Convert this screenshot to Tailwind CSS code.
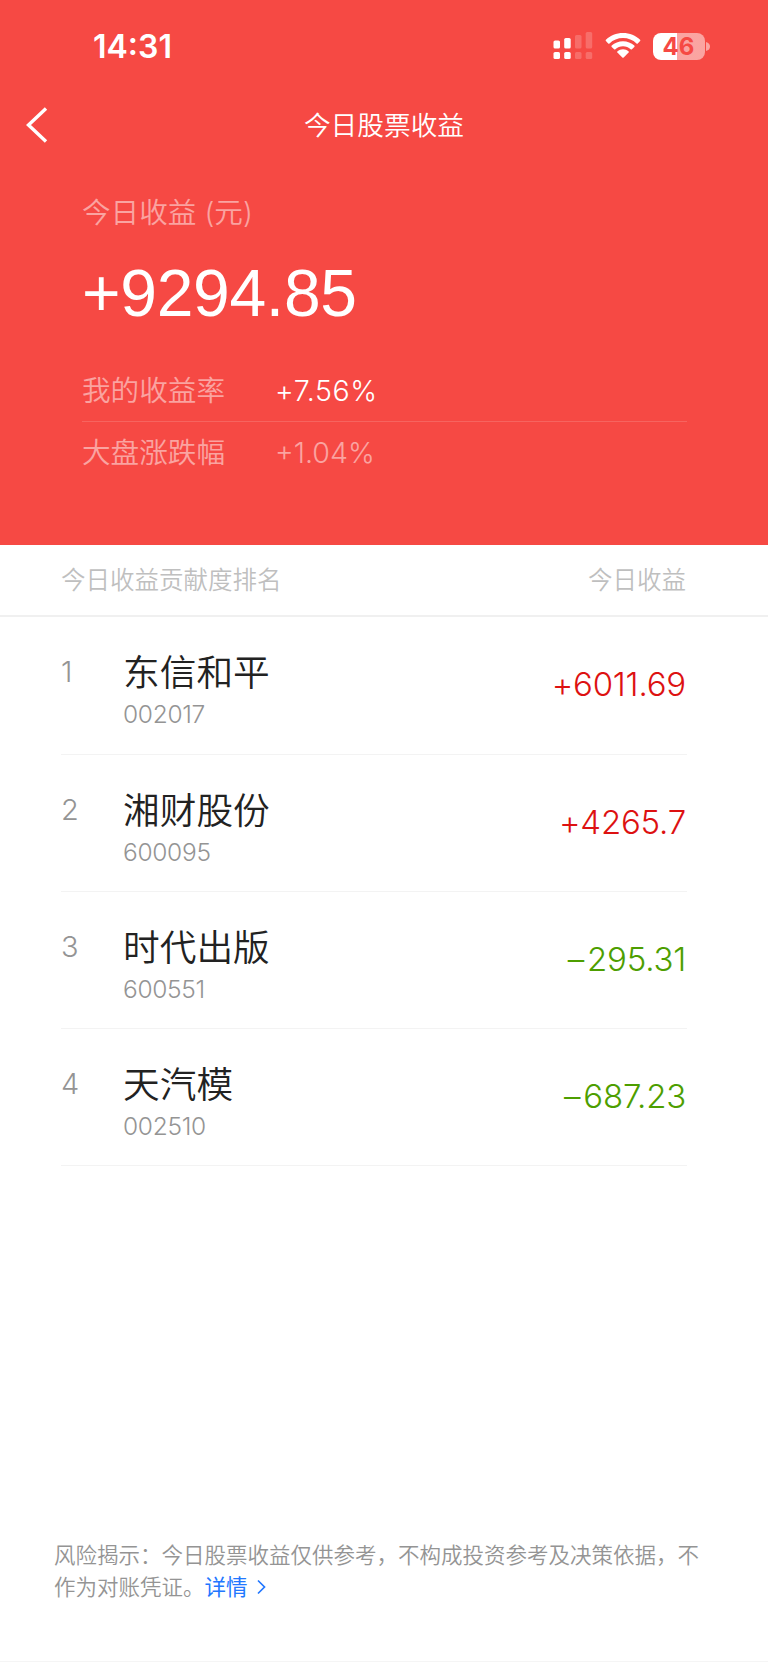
<!DOCTYPE html>
<html lang="zh-CN">
  <head>
    <meta charset="UTF-8" />
    <meta name="viewport" content="width=device-width, initial-scale=1.0" />
    <title>今日股票收益</title>
    <script src="https://cdn.jsdelivr.net/npm/@tailwindcss/browser@4"></script>
  </head>
  <body
    class="w-[768px] h-[1662px] flex flex-col bg-white font-[350] font-['Inter','Noto_Sans_CJK_SC',sans-serif]"
  >
    <header class="h-[545px] bg-[#f64944] text-white">
      <!-- status bar -->
      <div class="h-[92px] pl-[93px] pr-[58px] flex items-center justify-between">
        <p class="pt-[2px] text-[32px] leading-[92px] font-semibold">14:31</p>
        <div class="flex items-center gap-3">
          <svg class="w-10 h-7" viewBox="0 0 40 28" fill="#fff">
            <rect x="0.5" y="8.5" width="6.5" height="8" rx="1.6" />
            <rect x="0.5" y="20" width="6.5" height="7" rx="1.6" />
            <rect x="11.2" y="6" width="6.5" height="10.5" rx="1.6" />
            <rect x="11.2" y="20" width="6.5" height="7" rx="1.6" />
            <g opacity="0.2">
              <rect x="22" y="3" width="6.5" height="13.5" rx="1.6" />
              <rect x="22" y="20" width="6.5" height="7" rx="1.6" />
              <rect x="32.7" y="0" width="6.5" height="16.5" rx="1.6" />
              <rect x="32.7" y="20" width="6.5" height="7" rx="1.6" />
            </g>
          </svg>
          <svg class="w-9 h-7" viewBox="0 0 36 28" fill="#fff">
            <path d="M18 1C11.3 1 5.200 3.500 0.900 7.800Q0.300 8.500 0.900 9.100L3.200 11.400Q3.900 12 4.500 11.400C8.100 8 12.800 6 18 6S27.900 8 31.500 11.400Q32.100 12 32.800 11.400L35.100 9.100Q35.700 8.500 35.100 7.800C30.800 3.500 24.700 1 18 1Z" />
            <path d="M18 9.200C13.700 9.200 9.700 10.800 6.700 13.600Q6 14.300 6.700 14.900L9.100 17.200Q9.700 17.800 10.400 17.200C12.400 15.300 15.100 14.200 18 14.200S23.600 15.300 25.600 17.200Q26.300 17.800 26.900 17.200L29.300 14.900Q30 14.300 29.300 13.600C26.300 10.800 22.300 9.200 18 9.200Z" />
            <path d="M18 17.300C15.900 17.300 14 18 12.500 19.300Q11.800 20 12.400 20.600L17.300 25.500Q18 26.100 18.700 25.500L23.600 20.600Q24.200 20 23.500 19.300C22 18 20.100 17.300 18 17.300Z" />
          </svg>
          <div class="flex items-center gap-[1.500px]">
            <div
              class="w-[52px] h-[27px] rounded-[8px] bg-linear-to-r from-white from-46% to-white/50 to-46% text-center text-[24px] leading-[27px] font-bold text-[#f64944]"
            >
              46
            </div>
            <svg class="w-1 h-[9px]" viewBox="0 0 4 9">
              <path d="M0 0Q4 1 4 4.500Q4 8 0 9Z" fill="#fff" opacity="0.500" />
            </svg>
          </div>
        </div>
      </div>

      <!-- title bar -->
      <div class="h-[66px] px-[26px] grid grid-cols-[1fr_auto_1fr] items-center">
        <svg class="w-[22px] h-9" viewBox="0 0 22 36" fill="none">
          <path d="M20 1.500L2.500 18L20 34.500" stroke="#fff" stroke-width="3.400" />
        </svg>
        <h1 class="text-[26.700px] leading-[66px]">今日股票收益</h1>
      </div>

      <!-- summary -->
      <div class="pt-[35px] pl-[82px] pr-[81px]">
        <p class="text-[28.600px] leading-[40px] text-white/50">
          今日收益 (元)
        </p>
        <p
          class="mt-[22px] text-[66px] leading-[76px] tracking-[-0.300px] font-normal font-['Liberation_Sans',sans-serif]"
        >
          +9294.85
        </p>
        <div class="mt-[30px] h-[61px] flex items-center border-b border-white/15 text-[28.600px]">
          <p class="w-[193px] text-white/50">我的收益率</p>
          <p class="tracking-[0.600px]">+7.56%</p>
        </div>
        <div class="h-[62px] flex items-center text-[28.600px] text-white/50">
          <p class="w-[193px]">大盘涨跌幅</p>
          <p>+1.04%</p>
        </div>
      </div>
    </header>

    <div
      class="h-[72px] pl-[61px] pr-[82px] flex items-center justify-between border-b-2 border-[#f0f0f0] text-[24.500px] text-[#bfbfbf]"
    >
      <p>今日收益贡献度排名</p>
      <p>今日收益</p>
    </div>

    <main class="pl-[61px] pr-[81px]">
      <div class="h-[138px] flex border-b border-[#f3f3f3]">
        <p class="w-[62px] pt-[37px] text-[29px] leading-[36px] text-[#949494]">1</p>
        <div class="flex-1 pt-[33px]">
          <h2 class="text-[36.700px] leading-[46px] text-[#222]">东信和平</h2>
          <p class="mt-[3px] text-[24.500px] leading-[30px] tracking-[-0.300px] text-[#949494]">002017</p>
        </div>
        <p class="pt-[47px] pr-px text-[33px] leading-[40px] tracking-[-0.200px] text-[#dd1111]">+6011.69</p>
      </div>
      <div class="h-[137px] flex border-b border-[#f3f3f3]">
        <p class="w-[62px] pt-[37px] text-[29px] leading-[36px] text-[#949494]">2</p>
        <div class="flex-1 pt-[33px]">
          <h2 class="text-[36.700px] leading-[46px] text-[#222]">湘财股份</h2>
          <p class="mt-[3px] text-[24.500px] leading-[30px] tracking-[-0.300px] text-[#949494]">600095</p>
        </div>
        <p class="pt-[47px] pr-px text-[33px] leading-[40px] tracking-[-0.200px] text-[#dd1111]">+4265.7</p>
      </div>
      <div class="h-[137px] flex border-b border-[#f3f3f3]">
        <p class="w-[62px] pt-[37px] text-[29px] leading-[36px] text-[#949494]">3</p>
        <div class="flex-1 pt-[33px]">
          <h2 class="text-[36.700px] leading-[46px] text-[#222]">时代出版</h2>
          <p class="mt-[3px] text-[24.500px] leading-[30px] tracking-[-0.300px] text-[#949494]">600551</p>
        </div>
        <p class="pt-[47px] pr-px text-[33px] leading-[40px] tracking-[-0.200px] text-[#4d9e00]"><span class="mr-[3px]">–</span>295.31</p>
      </div>
      <div class="h-[137px] flex border-b border-[#f3f3f3]">
        <p class="w-[62px] pt-[37px] text-[29px] leading-[36px] text-[#949494]">4</p>
        <div class="flex-1 pt-[33px]">
          <h2 class="text-[36.700px] leading-[46px] text-[#222]">天汽模</h2>
          <p class="mt-[3px] text-[24.500px] leading-[30px] tracking-[-0.300px] text-[#949494]">002510</p>
        </div>
        <p class="pt-[47px] pr-px text-[33px] leading-[40px] tracking-[-0.200px] text-[#4d9e00]"><span class="mr-[3px]">–</span>687.23</p>
      </div>
    </main>

    <footer class="mt-auto h-[123px] pl-[54px] border-b border-[#f5f5f5] text-[21.500px] leading-[32px] text-[#949494]">
      <p>风险揭示：今日股票收益仅供参考，不构成投资参考及决策依据，不</p>
      <p class="flex items-center">
        作为对账凭证。<a href="#" class="flex items-center gap-[9px] font-normal text-[#2277ff]"
          >详情
          <svg class="w-[9px] h-4" viewBox="0 0 9 16" fill="none">
            <path d="M1 1.500L7.500 8L1 14.500" stroke="#2277ff" stroke-width="1.700" />
          </svg>
        </a>
      </p>
    </footer>
  </body>
</html>
